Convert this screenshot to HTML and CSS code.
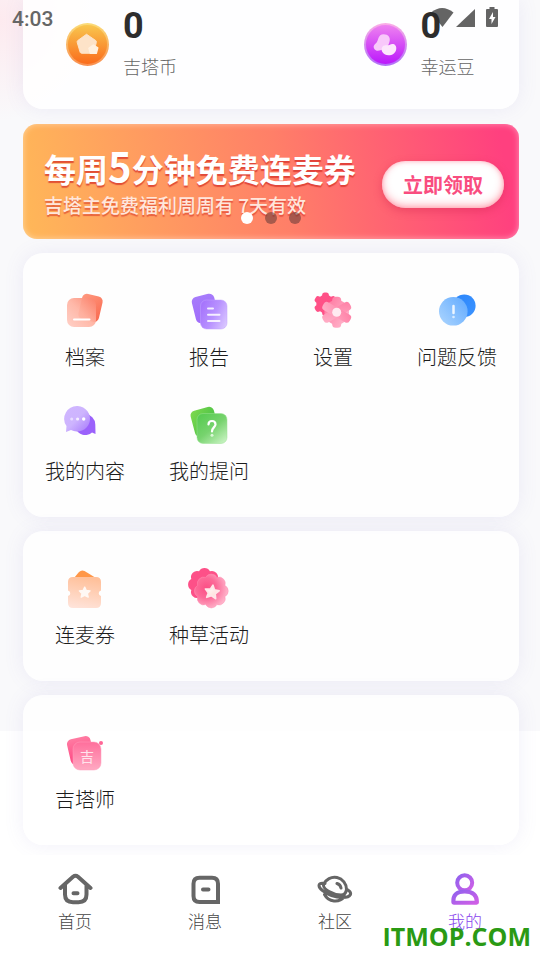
FILE: index.html
```html
<!DOCTYPE html>
<html lang="zh-CN">
<head>
<meta charset="utf-8">
<meta name="viewport" content="width=device-width, initial-scale=1">
<title>我的</title>
<link rel="stylesheet" href="styles.css">
</head>
<body>
<svg class="defs" aria-hidden="true">
  <defs>
    <linearGradient id="redBack" x1="0" y1="0" x2="1" y2="1"><stop offset="0" stop-color="#ff9a80"/><stop offset="1" stop-color="#f9694f"/></linearGradient>
    <linearGradient id="redFront" x1="1" y1="0" x2="0" y2="1"><stop offset="0" stop-color="#fb7f68"/><stop offset=".5" stop-color="#ffb3a2"/><stop offset="1" stop-color="#ffcdc3"/></linearGradient>
    <linearGradient id="violetBack" x1="0" y1="0" x2="0" y2="1"><stop offset="0" stop-color="#a67bfb"/><stop offset="1" stop-color="#a06cfa"/></linearGradient>
    <linearGradient id="violetFront" x1="0" y1=".3" x2="1" y2=".8"><stop offset="0" stop-color="#a675fc"/><stop offset=".5" stop-color="#b892ff"/><stop offset="1" stop-color="#d9c6ff"/></linearGradient>
    <linearGradient id="pinkBack" x1="0" y1="0" x2="0" y2="1"><stop offset="0" stop-color="#ff7ba2"/><stop offset="1" stop-color="#ff4380"/></linearGradient>
    <linearGradient id="gearFront" gradientUnits="userSpaceOnUse" x1="-12" y1="-8" x2="14" y2="8"><stop offset="0" stop-color="#ff7aa2"/><stop offset="1" stop-color="#ffb9ce"/></linearGradient>
    <linearGradient id="blueBack" x1="0" y1="0" x2="1" y2="1"><stop offset="0" stop-color="#2b86fb"/><stop offset="1" stop-color="#3c93ff"/></linearGradient>
    <linearGradient id="blueFront" x1="1" y1="0" x2="0" y2=".8"><stop offset="0" stop-color="#5fa9ff"/><stop offset="1" stop-color="#a7d2fe"/></linearGradient>
    <linearGradient id="chatFront" x1="0" y1="0" x2="1" y2="1"><stop offset="0" stop-color="#d0b6ff"/><stop offset=".5" stop-color="#cdb4fe"/><stop offset="1" stop-color="#a677fb"/></linearGradient>
    <linearGradient id="greenBack" x1="0" y1="0" x2="1" y2="1"><stop offset="0" stop-color="#80da4f"/><stop offset="1" stop-color="#37b843"/></linearGradient>
    <linearGradient id="greenFront" x1=".1" y1="0" x2=".9" y2="1"><stop offset="0" stop-color="#56cb50"/><stop offset=".5" stop-color="#77d36e"/><stop offset="1" stop-color="#c9f3c3"/></linearGradient>
    <linearGradient id="orangeFront" x1=".5" y1="0" x2=".3" y2="1"><stop offset="0" stop-color="#ffc09a"/><stop offset="1" stop-color="#ffe3d9"/></linearGradient>
    <radialGradient id="flowerFront" gradientUnits="userSpaceOnUse" cx="-5" cy="-3" r="23"><stop offset="0" stop-color="#fb4f85"/><stop offset=".45" stop-color="#fc6a98"/><stop offset="1" stop-color="#ffb9ce"/></radialGradient>
    <linearGradient id="masterFront" x1="0" y1="0" x2="0" y2="1"><stop offset="0" stop-color="#ff6f9c"/><stop offset="1" stop-color="#ffa9c2"/></linearGradient>
    <linearGradient id="mine" x1="0" y1="0" x2="1" y2="1"><stop offset="0" stop-color="#9161ee"/><stop offset="1" stop-color="#cf5fe6"/></linearGradient>
    <linearGradient id="coin" x1="0" y1="0" x2="0" y2="1"><stop offset="0" stop-color="#f9c64e"/><stop offset="1" stop-color="#fa6c1c"/></linearGradient>
    <linearGradient id="coinRim" x1="0" y1="0" x2="0" y2="1"><stop offset="0" stop-color="#fbdc78"/><stop offset="1" stop-color="#f98f50"/></linearGradient>
    <linearGradient id="bean" x1="0" y1="0" x2="0" y2="1"><stop offset="0" stop-color="#ee82f0"/><stop offset="1" stop-color="#bb18fb"/></linearGradient>
    <linearGradient id="beanRim" x1="0" y1="0" x2="0" y2="1"><stop offset="0" stop-color="#fbaee6"/><stop offset="1" stop-color="#b070f8"/></linearGradient>
    <linearGradient id="star" x1="0" y1="0" x2="1" y2="1"><stop offset="0" stop-color="#fff"/><stop offset="1" stop-color="#ffd9d2"/></linearGradient>
    <g id="gear">
      <circle r="12.300"/>
      <rect id="teeth" x="-4.500" y="-15.500" width="9" height="31" rx="3.500"/>
      <use href="#teeth" transform="rotate(60)"/><use href="#teeth" transform="rotate(120)"/>
    </g>
    <path id="flower" stroke-linejoin="round" d="M-5.700-13.900A6.500 6.500 0 0 1 5.700-13.900 6.500 6.500 0 0 1 13.900-5.700 6.500 6.500 0 0 1 13.900 5.700 6.500 6.500 0 0 1 5.700 13.900 6.500 6.500 0 0 1-5.700 13.900 6.500 6.500 0 0 1-13.900 5.700 6.500 6.500 0 0 1-13.900-5.700 6.500 6.500 0 0 1-5.700-13.900Z"/>
    <path id="starShape" d="M0-6 1.800-2.200 6-1.800 3 1.200 3.900 5.200 0 3.300-3.900 5.200-3 1.200-6-1.800-1.800-2.200Z" stroke-width="1.500" stroke-linejoin="round"/>
  </defs>
</svg>

<div class="page">
  <header class="status" aria-label="状态栏">
    <time class="clock">4:03</time>
    <svg class="signals" viewBox="0 0 68 22" aria-hidden="true">
      <path d="M0 5.500Q11-3.500 22.500 5.500L11.500 20Z"/>
      <path d="M44 2V20H25Z"/>
      <path fill-rule="evenodd" d="M58.500 0h5v2H66a1 1 0 0 1 1 1v16a1 1 0 0 1-1 1H56a1 1 0 0 1-1-1V3a1 1 0 0 1 1-1h2.500ZM62 5l-4 7h2.500v5l4-7H62Z"/>
    </svg>
  </header>

  <main class="content">
    <section class="card wallet">
      <div class="asset">
        <svg class="coin" viewBox="0 0 44 44" aria-hidden="true">
          <circle cx="22" cy="22" r="22" fill="url(#coinRim)"/><circle cx="22" cy="22" r="20" fill="url(#coin)"/>
          <path d="M21 11.500 30.500 18Q31.500 19 31 20L28.500 30Q28 31 27 31H16Q15 31 14.500 30L11.500 20Q11.200 18.500 12 18Z" fill="#fde3c8" stroke="#fde3c8" stroke-linejoin="round"/>
          <path d="M28 22.500 32.500 25.500 31 31H25L23.500 26Z" fill="#fff1e0" stroke="#fff1e0" stroke-width="1.500" stroke-linejoin="round"/>
        </svg>
        <div><div class="amount">0</div><div class="asset-name">吉塔币</div></div>
      </div>
      <div class="asset">
        <svg class="coin" viewBox="0 0 44 44" aria-hidden="true">
          <circle cx="22" cy="22" r="22" fill="url(#beanRim)"/><circle cx="22" cy="22" r="20" fill="url(#bean)"/>
          <path d="M20 11.500C25 11.500 27.500 15 26 19.500 25 23 24 25 20 26.500 16 28.500 13 29 11 27 9 24.500 10 22.500 12.500 20.500 15 18 14 11.500 20 11.500Z" fill="#f8c8fa"/>
          <path d="M19 24C21 22 23 23 26 22.500 30 20 33.500 22.500 33 26.500 32.500 30.500 29 33 25 33 20 33 16 28 19 24Z" fill="#fde6fc"/>
        </svg>
        <div><div class="amount">0</div><div class="asset-name">幸运豆</div></div>
      </div>
    </section>

    <section class="banner">
      <div class="banner-copy">
        <h1 class="banner-title">每周<span class="big">5</span>分钟免费连麦券</h1>
        <p class="banner-sub">吉塔主免费福利周周有 7天有效</p>
      </div>
      <button class="claim" type="button">立即领取</button>
      <div class="dots" aria-hidden="true"><i class="dot current"></i><i class="dot"></i><i class="dot"></i></div>
    </section>

    <nav class="card menu" aria-label="常用功能">
      <a class="entry" href="#files">
        <svg class="icon" viewBox="0 0 44 44" aria-hidden="true">
          <rect x="17" y="6" width="21" height="26" rx="5" transform="rotate(13 28 19)" fill="url(#redBack)"/>
          <rect x="4" y="9" width="29" height="29" rx="7" fill="url(#redFront)" fill-opacity=".93"/>
          <path d="M11 30.500H26.500" stroke="#fff" stroke-width="2" stroke-linecap="round"/>
        </svg><span>档案</span></a>
      <a class="entry" href="#reports">
        <svg class="icon" viewBox="0 0 44 44" aria-hidden="true">
          <rect x="6.500" y="6" width="23" height="27" rx="5" transform="rotate(-14 18 19)" fill="url(#violetBack)"/>
          <rect x="13.500" y="11" width="26.500" height="29" rx="6" fill="url(#violetFront)" stroke="#c3a3ff" stroke-width=".5"/>
          <path d="M21 19.500H26M21 25.700H32.500M21 32H32.500" stroke="#fff" stroke-opacity=".85" stroke-width="2" stroke-linecap="round"/>
        </svg><span>报告</span></a>
      <a class="entry" href="#settings">
        <svg class="icon" viewBox="0 0 44 44" aria-hidden="true">
          <use href="#gear" transform="translate(14.500 15) scale(.75)" fill="#ff5187"/>
          <g transform="translate(25.700 23.300)"><use href="#gear" fill="url(#gearFront)"/><circle r="4.500" fill="#ffeaf0"/></g>
        </svg><span>设置</span></a>
      <a class="entry" href="#feedback">
        <svg class="icon" viewBox="0 0 44 44" aria-hidden="true">
          <circle cx="29.300" cy="16.700" r="11.300" fill="url(#blueBack)"/><circle cx="18.300" cy="22.300" r="14.300" fill="url(#blueFront)"/>
          <path d="M18.500 17V24" stroke="#fff" stroke-opacity=".85" stroke-width="2.500" stroke-linecap="round"/><circle cx="18.500" cy="28" r="1.300" fill="#d9ecff"/>
        </svg><span>问题反馈</span></a>
      <a class="entry" href="#content">
        <svg class="icon" viewBox="0 0 44 44" aria-hidden="true">
          <path d="M22 11A10.500 10.500 0 0 1 32.300 21.500L32.500 31 29 29.500A10.500 10.500 0 1 1 22 11Z" fill="#9b62fb"/>
          <path d="M14.700 3A12.800 12.800 0 1 1 8 27L3 29 3.500 23A12.800 12.800 0 0 1 14.700 3Z" fill="url(#chatFront)"/>
          <circle cx="8.700" cy="16" r="1.500" fill="#e8dcff"/><circle cx="14.600" cy="16" r="1.600" fill="#f4edff"/><circle cx="20.700" cy="16" r="1.700" fill="#fff"/>
        </svg><span>我的内容</span></a>
      <a class="entry" href="#questions">
        <svg class="icon" viewBox="0 0 44 44" aria-hidden="true">
          <rect x="5.500" y="5.500" width="24" height="27" rx="5" transform="rotate(-15 17 19)" fill="url(#greenBack)"/>
          <rect x="10" y="10.500" width="30" height="30" rx="6" fill="url(#greenFront)" stroke="#9be393" stroke-width=".5"/>
          <path d="M21.500 21.500Q21.500 18 25 18T28.500 21.500C28.500 24 25 24.500 25 28.500" fill="none" stroke="#fff" stroke-width="2.200" stroke-linecap="round"/><circle cx="25" cy="32.300" r="1.500" fill="#dbf8d8"/>
        </svg><span>我的提问</span></a>
    </nav>

    <nav class="card menu" aria-label="活动">
      <a class="entry" href="#coupons">
        <svg class="icon" viewBox="0 0 44 44" aria-hidden="true">
          <path d="M11 11 16 5Q18.500 2.500 21.500 4L33 11Z" fill="#ff9748"/>
          <path d="M10 10H33Q38 10 38 15V23.500A2.800 2.800 0 0 0 38 29V36Q38 41 33 41H10Q5 41 5 36V29A2.800 2.800 0 0 0 5 23.500V15Q5 10 10 10Z" fill="url(#orangeFront)"/>
          <use href="#starShape" transform="translate(21.700 25.500) scale(.9)" fill="#fff8f4" stroke="#fff8f4"/>
        </svg><span>连麦券</span></a>
      <a class="entry" href="#events">
        <svg class="icon" viewBox="0 0 44 44" aria-hidden="true">
          <use href="#flower" transform="translate(17.500 17.500) scale(.95)" fill="#fd5088"/>
          <use href="#flower" transform="translate(24.300 24) scale(.98)" fill="url(#flowerFront)" stroke="#ff8bb0" stroke-width=".5"/>
          <use href="#starShape" transform="translate(25 25) rotate(8) scale(1.150)" fill="url(#star)" stroke="#ffe6e8"/>
        </svg><span>种草活动</span></a>
    </nav>

    <nav class="card menu" aria-label="吉塔师">
      <a class="entry" href="#master">
        <svg class="icon" viewBox="0 0 44 44" aria-hidden="true">
          <rect x="5.500" y="6.500" width="24" height="26" rx="5" transform="rotate(-13 17 19)" fill="url(#pinkBack)"/>
          <rect x="10" y="11" width="28" height="28" rx="7" fill="url(#masterFront)" stroke="#ff9fbc" stroke-width=".5"/>
          <circle cx="38" cy="12" r="2" fill="#ff6696"/>
          <text class="glyph" x="24" y="31" text-anchor="middle">吉</text>
        </svg><span>吉塔师</span></a>
    </nav>
  </main>

  <nav class="tabs" aria-label="主导航">
    <a class="tab" href="#home">
      <svg class="tab-icon" viewBox="0 0 36 36" aria-hidden="true"><path d="M3.500 17 16 5.800Q18.500 3.800 21 5.800L33.500 17M8 14V23.500Q8 31.200 16 31.200H21.500Q29.500 31.200 29.500 23.500V14M16.500 22.300H20.500"/></svg><span>首页</span></a>
    <a class="tab" href="#messages">
      <svg class="tab-icon" viewBox="0 0 36 36" aria-hidden="true"><path d="M12.500 6.700H25Q31 6.700 31 12.700V31H12.500Q6.500 31 6.500 25V12.700Q6.500 6.700 12.500 6.700ZM16 18.500H21.500"/></svg><span>消息</span></a>
    <a class="tab" href="#community">
      <svg class="tab-icon planet" viewBox="0 0 36 36" aria-hidden="true"><path d="M6.500 13.500A12 12 0 0 1 29.500 18.500M7.500 23.500A12 12 0 0 0 27.500 25.500M8 12.500C1 11 .2 15.500 5.500 19.500 10 23 18 26.500 25.500 26.500 34 26.500 36.500 22 29.500 18M6.500 14C6 18 16 24 24 24 27.500 24 29 22 29.500 18.500M20 12.500Q23.500 13.500 24 17"/></svg><span>社区</span></a>
    <a class="tab active" href="#mine-tab" aria-current="page">
      <svg class="tab-icon" viewBox="0 0 36 36" aria-hidden="true"><circle cx="17.700" cy="11.800" r="7.500"/><path d="M6.300 31.300Q5.500 20.500 17.700 20.500T30 31.300Q30 31.700 29.500 31.700H6.800Q6.300 31.700 6.300 31.300Z"/></svg><span>我的</span></a>
  </nav>
  <div class="mark">ITMOP.COM</div>
</div>
</body>
</html>
```

FILE: styles.css
```css
* { box-sizing: border-box; }

body {
  margin: 0;
  font-family: "Noto Sans CJK SC", sans-serif;
  font-weight: 300;
  color: #1c1c1c;
  background: #fff;
}

a { color: inherit; text-decoration: none; }

.defs { position: absolute; width: 0; height: 0; }

.page {
  position: relative;
  display: flex;
  flex-direction: column;
  min-height: 100vh;
  overflow: hidden;
  background:
    radial-gradient(circle at 0 20px, #fdeaef 0, rgba(253, 234, 239, 0) 100px) no-repeat,
    linear-gradient(#f9f9fb, #f9f9fb) 0 0 / 100% 731px no-repeat,
    #fff;
}

.status {
  position: absolute;
  z-index: 2;
  top: 7px;
  left: 12px;
  right: 41px;
  display: flex;
  justify-content: space-between;
  color: #666;
}

.clock { font: 500 21px/24px Roboto, sans-serif; }
.signals { width: 68px; height: 22px; fill: rgba(40, 40, 40, .72); }

.content {
  display: flex;
  flex-direction: column;
  gap: 14px;
  padding: 0 21px 10px 23px;
}

.card {
  border-radius: 20px;
  background: rgba(255, 255, 255, .75);
  box-shadow: 0 0 20px rgba(120, 110, 200, .1);
}

.wallet {
  display: grid;
  grid-template-columns: 3fr 2fr;
  height: 109px;
  padding-top: 6px;
  border-radius: 0 0 20px 20px;
  background: rgba(255, 255, 255, .85);
}

.asset { display: flex; gap: 14px; padding-left: 43px; }
.coin { width: 43px; height: 43px; margin-top: 17px; }
.amount { font: 700 36px/40px Roboto, sans-serif; color: #2d2d2d; }
.asset-name { margin-top: 6px; font-size: 18px; line-height: 28px; color: #666; }

.banner {
  position: relative;
  display: flex;
  justify-content: space-between;
  align-items: center;
  height: 115px;
  margin-top: 1px;
  padding: 2px 15px 0 21px;
  border-radius: 14px;
  background: linear-gradient(80deg, #ffb858 0%, #ff7f68 52%, #ff407f 96%);
  box-shadow: inset 0 0 6px rgba(255, 255, 255, .45);
  white-space: nowrap;
}

.banner-copy { color: #fff; }

.banner-title {
  margin: 0;
  font-size: 32px;
  font-weight: 700;
  line-height: 44px;
  text-shadow: 0 2px 1px rgba(215, 50, 40, .75);
}

.big { font-size: 40px; line-height: 40px; }

.banner-sub {
  margin: 0;
  font-size: 19px;
  font-weight: 500;
  line-height: 30px;
  color: #ffe6dc;
  text-shadow: 0 2px 1px rgba(215, 50, 40, .6);
}

.claim {
  width: 122px;
  height: 47px;
  margin-top: 4px;
  padding: 0;
  border: 0;
  border-radius: 24px;
  background: #fff;
  box-shadow: inset 0 -3px 8px rgba(255, 100, 120, .45), inset 0 0 4px rgba(255, 120, 150, .5), 0 3px 8px rgba(200, 30, 70, .35);
  font: 700 20px/28px "Noto Sans CJK SC", sans-serif;
  color: #f94d7f;
}

.dots {
  position: absolute;
  left: 0;
  right: 0;
  bottom: 15px;
  display: flex;
  justify-content: center;
  gap: 12px;
}

.dot { width: 12px; height: 12px; border-radius: 50%; background: rgba(80, 50, 50, .5); }
.dot.current { background: #fff; }

.menu {
  display: grid;
  grid-template-columns: repeat(4, 1fr);
  row-gap: 32px;
  padding: 36px 0 32px;
}

.entry {
  display: flex;
  flex-direction: column;
  align-items: center;
  gap: 10px;
  font-size: 20px;
  line-height: 28px;
  white-space: nowrap;
}

.icon { width: 44px; height: 44px; }
.glyph { font-size: 14px; font-weight: 400; fill: #ffe3ec; }

.tabs {
  display: grid;
  grid-template-columns: repeat(4, 1fr);
  margin-top: auto;
  padding: 16px 10px 25px;
  background: #fff;
}

.tab {
  display: flex;
  flex-direction: column;
  align-items: center;
  font-size: 17px;
  line-height: 28px;
  color: #444;
}

.tab-icon {
  width: 36px;
  height: 36px;
  fill: none;
  stroke: #666;
  stroke-width: 4px;
  stroke-linecap: round;
}

.planet { stroke-width: 3px; }
.active { color: #8a45ee; }
.active .tab-icon { stroke: url(#mine); }

.mark {
  position: absolute;
  right: 9px;
  bottom: 7px;
  font: 700 25px/34px "Open Sans", sans-serif;
  color: #2a9a14;
}
```
